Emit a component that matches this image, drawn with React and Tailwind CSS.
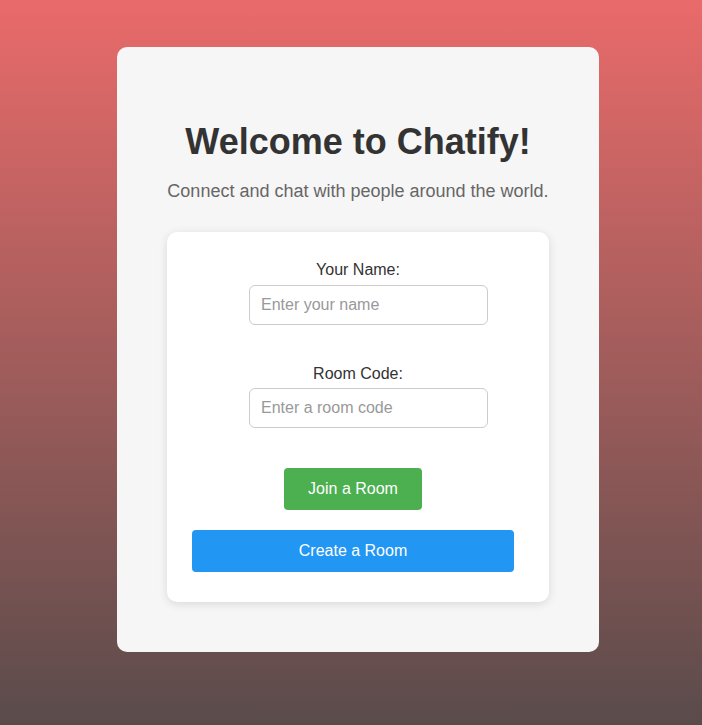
import React, { useState } from 'react';

const App = () => {
  const [name, setName] = useState('');
  const [roomCode, setRoomCode] = useState('');

  return (
    <div
      className="min-h-screen w-full bg-gradient-to-b from-[#ea6a6a] to-[#5a4b4b] pt-[47px] pb-[73px]"
      style={{ fontFamily: '"Liberation Sans", Arial, sans-serif' }}
    >
      {/* main card */}
      <div className="ml-[117px] w-[482px] bg-[#f6f6f6] rounded-[10px] px-[50px] pt-[50px] pb-[50px] text-center">
        <h1 className="mt-6 text-[36px] leading-[41px] font-bold text-[#333]">
          Welcome to Chatify!
        </h1>
        <p className="mt-[19px] text-[18px] leading-[21px] text-[#666]">
          Connect and chat with people around the world.
        </p>

        {/* form box */}
        <div className="mt-[30px] bg-white rounded-[10px] shadow-[0_2px_10px_rgba(0,0,0,0.12)] px-[25px] pt-[29px] pb-[30px]">
          <div className="flex flex-col">
            <label className="text-[16px] leading-[18px] text-[#333]">Your Name:</label>
            <input
              type="text"
              value={name}
              onChange={(e) => setName(e.target.value)}
              placeholder="Enter your name"
              className="mt-[6px] ml-[57px] w-[239px] h-[40px] px-[11px] border border-[#ccc] rounded-[6px] text-[16px] text-[#333] placeholder:text-[#999] outline-none"
            />
          </div>

          <div className="flex flex-col mt-[40px]">
            <label className="text-[16px] leading-[18px] text-[#333]">Room Code:</label>
            <input
              type="text"
              value={roomCode}
              onChange={(e) => setRoomCode(e.target.value)}
              placeholder="Enter a room code"
              className="mt-[5px] ml-[57px] w-[239px] h-[40px] px-[11px] border border-[#ccc] rounded-[6px] text-[16px] text-[#333] placeholder:text-[#999] outline-none"
            />
          </div>

          <div className="flex mt-[40px]">
            <button className="ml-[92px] w-[138px] h-[42px] bg-[#4caf50] text-white text-[16px] rounded-[4px]">
              Join a Room
            </button>
          </div>

          <button className="mt-[20px] block w-[322px] h-[42px] bg-[#2196f3] text-white text-[16px] rounded-[4px]">
            Create a Room
          </button>
        </div>
      </div>
    </div>
  );
};

export default App;
